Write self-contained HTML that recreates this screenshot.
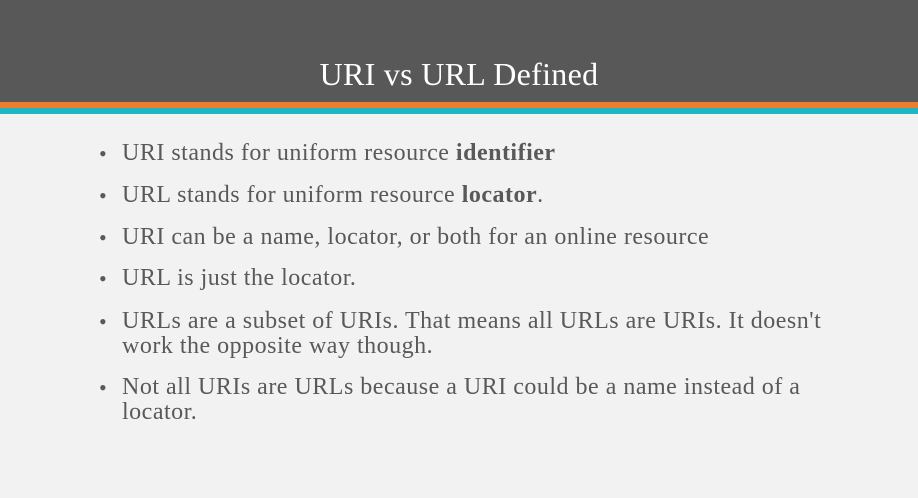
<!DOCTYPE html>
<html><head><style>
body{margin:0;width:918px;height:498px;background:#f2f2f2;overflow:hidden;font-family:"Liberation Serif",serif;}
.h{position:absolute;left:0;top:0;width:918px;height:102px;background:#585858;}
.o{position:absolute;left:0;top:102px;width:918px;height:6px;background:#ed7d31;}
.t{position:absolute;left:0;top:108px;width:918px;height:6px;background:#1fb5c1;}
.title{position:absolute;left:0;width:918px;top:54px;text-align:center;color:#fff;font-size:32px;line-height:40px;letter-spacing:0.3px;}
.b{position:absolute;left:122px;width:705px;color:#595959;font-size:24px;line-height:25px;letter-spacing:0.5px;}
.b:before{content:"•";position:absolute;left:-23px;font-size:22px;}
</style></head><body>
<div class="h"></div><div class="o"></div><div class="t"></div>
<div class="title">URI vs URL Defined</div>
<div class="b" style="top:141px">URI stands for uniform resource <b>identifier</b></div>
<div class="b" style="top:183px">URL stands for uniform resource <b>locator</b>.</div>
<div class="b" style="top:225px">URI can be a name, locator, or both for an online resource</div>
<div class="b" style="top:266px">URL is just the locator.</div>
<div class="b" style="top:309px">URLs are a subset of URIs. That means all URLs are URIs. It doesn't work the opposite way though.</div>
<div class="b" style="top:375px">Not all URIs are URLs because a URI could be a name instead of a locator.</div>
</body></html>
